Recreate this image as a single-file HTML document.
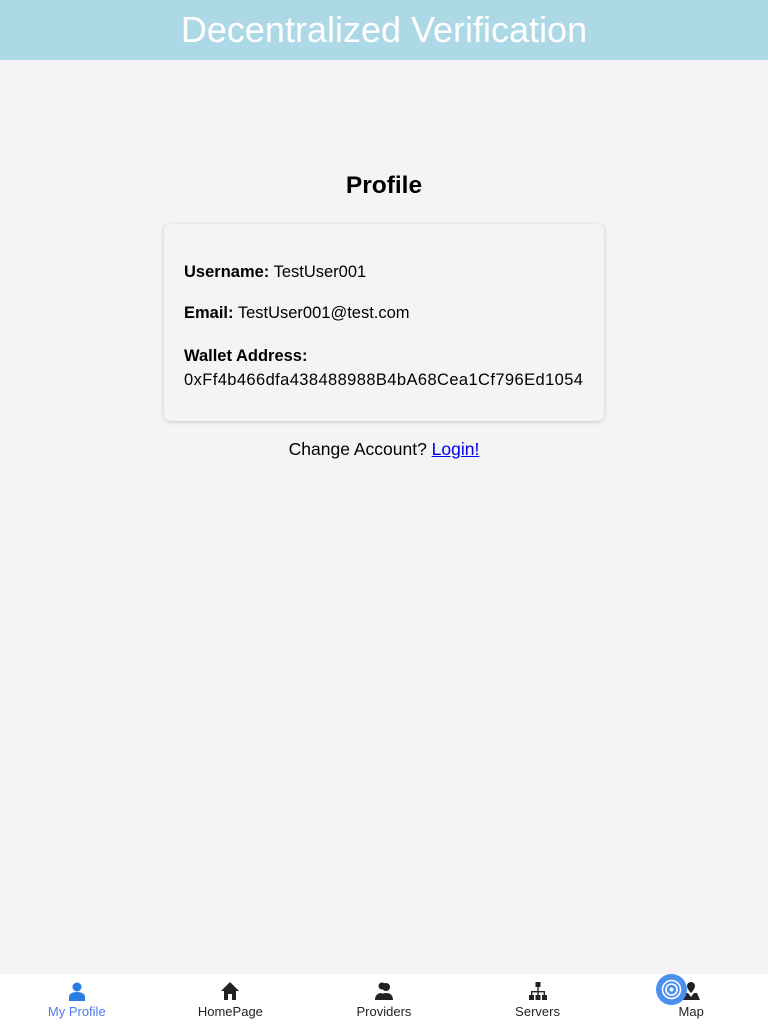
<!DOCTYPE html>
<html><head><meta charset="utf-8"><style>
*{margin:0;padding:0;box-sizing:border-box}
body{width:768px;height:1024px;background:#f4f4f4;font-family:"Liberation Sans",sans-serif;position:relative;overflow:hidden;color:#000}
.hdr{height:60px;background:#add8e6;color:#fff;text-align:center;font-size:36px;line-height:60px}
h2{position:absolute;top:172px;width:100%;text-align:center;font-size:24.5px;font-weight:bold}
.card{position:absolute;left:164px;top:224px;width:440px;height:197px;background:#f4f4f4;border-radius:6px;box-shadow:0 1px 4px rgba(0,0,0,.18);padding:38px 20px 0;font-size:16.5px}
.card p{margin-bottom:21px;line-height:20px}
.card b{font-weight:bold}
.chg{position:absolute;top:439px;width:100%;text-align:center;font-size:17.5px}
.chg a{color:#00e;text-decoration:underline}
.nav{position:absolute;top:974px;left:0;width:768px;height:50px;background:#fff;display:flex}
.it{flex:1;text-align:center;font-size:13px;color:#222;position:relative}
.it svg{display:block;margin:7px auto 3px;width:20px;height:20px}
.it span{display:block;margin-top:0}
</style></head><body>
<div class="hdr">Decentralized Verification</div>
<h2>Profile</h2>
<div class="card">
<p><b>Username:</b> TestUser001</p>
<p><b>Email:</b> TestUser001@test.com</p>
<p style="line-height:24px"><b>Wallet Address:</b><br><span style="letter-spacing:0.4px">0xFf4b466dfa438488988B4bA68Cea1Cf796Ed1054</span></p>
</div>
<div class="chg">Change Account? <a>Login!</a></div>
<div class="nav">
<div class="it" style="color:#4d7cf0"><svg viewBox="0 0 20 20"><circle cx="10" cy="6" r="4.5" fill="#2a7de1"/><path d="M2 20v-4c0-3 3-5 8-5s8 2 8 5v4z" fill="#2a7de1"/></svg><span>My Profile</span></div>
<div class="it"><svg viewBox="0 0 20 20"><path d="M10 1L1 10h3v9h4v-6h4v6h4v-9h3z" fill="#222"/></svg><span>HomePage</span></div>
<div class="it"><svg viewBox="0 0 20 20"><circle cx="8" cy="5" r="3.5" fill="#222"/><circle cx="12" cy="6" r="4" fill="#222"/><path d="M1 19c0-5 3-7 7-7l-1 7zM5 19c0-5 3-7 7-7s7 2 7 7z" fill="#222"/></svg><span>Providers</span></div>
<div class="it"><svg viewBox="0 0 20 20" fill="#222"><rect x="7.5" y="1" width="5" height="5"/><rect x="9.3" y="6" width="1.4" height="5"/><rect x="3" y="10" width="14" height="1.4"/><rect x="3" y="10" width="1.4" height="4"/><rect x="15.6" y="10" width="1.4" height="4"/><rect x="9.3" y="10" width="1.4" height="4"/><rect x="1" y="14" width="5" height="5"/><rect x="7.5" y="14" width="5" height="5"/><rect x="14" y="14" width="5" height="5"/></svg><span>Servers</span></div>
<div class="it"><svg viewBox="0 0 20 20"><path d="M10 1a4 4 0 0 0-4 4c0 3 4 7 4 7s4-4 4-7a4 4 0 0 0-4-4z" fill="#222"/><path d="M1 19l3-7h3l3 4 3-4h3l3 7z" fill="#222"/></svg><span>Map</span>
<div style="position:absolute;left:42px;top:0;width:31px;height:31px;border-radius:50%;background:#4a90f0"><svg viewBox="0 0 31 31" style="margin:0;width:31px;height:31px"><circle cx="15.5" cy="15.5" r="9" fill="none" stroke="#fff" stroke-width="1.6"/><circle cx="15.5" cy="15.5" r="5.5" fill="none" stroke="#fff" stroke-width="1.6"/><circle cx="15.5" cy="15.5" r="2" fill="#fff"/></svg></div></div>
</div>
</body></html>
